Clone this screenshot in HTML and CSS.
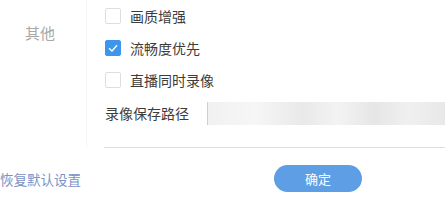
FILE: index.html
```html
<!DOCTYPE html>
<html lang="zh-CN">
<head>
    <meta charset="UTF-8">
    <title>设置</title>
    <link rel="stylesheet" href="styles.css">
</head>
<body>
<div class="panel">
    <div class="settings">
        <div class="side"><span>其他</span></div>
        <div class="main">
            <ul class="opts">
                <li><em></em><span>画质增强</span></li>
                <li><em class="on"><svg viewBox="0 0 16 16" width="16" height="16"><path d="M4 8.3 L7 11 L12 5.2" fill="none" stroke="#fff" stroke-width="1.4"/></svg></em><span>流畅度优先</span></li>
                <li><em></em><span>直播同时录像</span></li>
                <li class="path"><span>录像保存路径</span><div class="input"></div></li>
            </ul>
            <div class="line"></div>
        </div>
    </div>
    <div class="foot">
        <a class="reset">恢复默认设置</a>
        <button class="ok">确定</button>
    </div>
</div>
</body>
</html>
```

FILE: styles.css
```css
* {
    margin: 0;
    padding: 0;
    font-family: "Noto Sans CJK SC", "Noto Sans", sans-serif;
}

ul, li {
    list-style: none;
}

body {
    background: #fff;
    width: 445px;
    height: 204px;
    overflow: hidden;
}

.settings {
    display: flex;
    height: 147px;
}

.side {
    width: 87px;
    border-right: 1px solid #f4f4f4;
    padding-left: 25px;
    box-sizing: border-box;
    padding-top: 22px;
    font-size: 15px;
    color: #a8a8a8;
}

.main {
    flex: 1;
    padding-left: 17px;
}

.opts li {
    display: flex;
    align-items: center;
    height: 32px;
    padding-left: 1px;
    font-size: 14px;
    color: #3c3c3c;
}

.opts em {
    width: 14px;
    height: 14px;
    border: 1px solid #dedede;
    border-radius: 2px;
    margin-right: 9px;
    display: block;
}

.opts em.on {
    background: #3d95ec;
    border-color: #3d95ec;
}

.opts em svg {
    display: block;
    margin: -1px;
}

.opts li.path {
    height: 34px;
}

.path span {
    width: 102px;
}

.input {
    flex: 1;
    height: 23px;
    border-left: 1px solid #cfcfcf;
    background: linear-gradient(90deg, #f1f1f1 0%, #f6f6f6 20%, #e9e9e9 40%, #f3f3f3 55%, #e6e6e6 70%, #f0f0f0 85%, #e8e8e8 100%);
}

.line {
    margin-top: 17px;
    height: 1px;
    background: #d8dee8;
}

.foot {
    display: flex;
    align-items: center;
    padding-top: 18px;
}

.reset {
    font-size: 13.5px;
    color: #7b92c9;
    width: 274px;
}

.ok {
    width: 88px;
    height: 27px;
    border: none;
    border-radius: 14px;
    background: #5d9ee4;
    color: #fff;
    font-size: 13px;
}
```
